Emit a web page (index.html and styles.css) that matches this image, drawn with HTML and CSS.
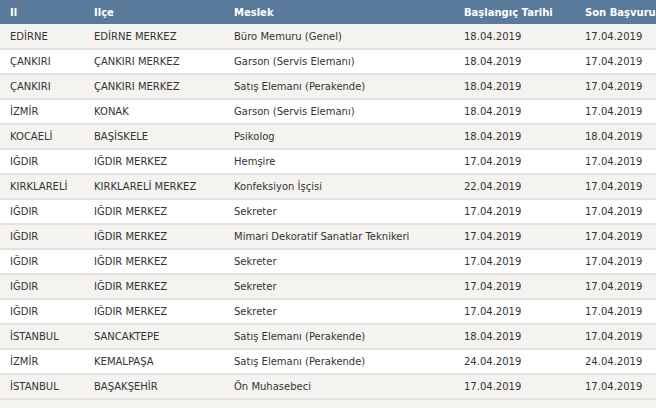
FILE: index.html
```html
<!DOCTYPE html>
<html lang="tr">
<head>
<meta charset="utf-8">
<link rel="stylesheet" href="styles.css">
</head>
<body>
<table class="jobs">
  <colgroup>
    <col class="c-il"><col class="c-ilce"><col class="c-meslek"><col class="c-bas"><col class="c-son">
  </colgroup>
  <thead>
    <tr><th>Il</th><th>Ilçe</th><th>Meslek</th><th>Başlangıç Tarihi</th><th>Son Başvuru</th></tr>
  </thead>
  <tbody>
    <tr><td>EDİRNE</td><td>EDİRNE MERKEZ</td><td>Büro Memuru (Genel)</td><td>18.04.2019</td><td>17.04.2019</td></tr>
    <tr><td>ÇANKIRI</td><td>ÇANKIRI MERKEZ</td><td>Garson (Servis Elemanı)</td><td>18.04.2019</td><td>17.04.2019</td></tr>
    <tr><td>ÇANKIRI</td><td>ÇANKIRI MERKEZ</td><td>Satış Elemanı (Perakende)</td><td>18.04.2019</td><td>17.04.2019</td></tr>
    <tr><td>İZMİR</td><td>KONAK</td><td>Garson (Servis Elemanı)</td><td>18.04.2019</td><td>17.04.2019</td></tr>
    <tr><td>KOCAELİ</td><td>BAŞİSKELE</td><td>Psikolog</td><td>18.04.2019</td><td>18.04.2019</td></tr>
    <tr><td>IĞDIR</td><td>IĞDIR MERKEZ</td><td>Hemşire</td><td>17.04.2019</td><td>17.04.2019</td></tr>
    <tr><td>KIRKLARELİ</td><td>KIRKLARELİ MERKEZ</td><td>Konfeksiyon İşçisi</td><td>22.04.2019</td><td>17.04.2019</td></tr>
    <tr><td>IĞDIR</td><td>IĞDIR MERKEZ</td><td>Sekreter</td><td>17.04.2019</td><td>17.04.2019</td></tr>
    <tr><td>IĞDIR</td><td>IĞDIR MERKEZ</td><td>Mimari Dekoratif Sanatlar Teknikeri</td><td>17.04.2019</td><td>17.04.2019</td></tr>
    <tr><td>IĞDIR</td><td>IĞDIR MERKEZ</td><td>Sekreter</td><td>17.04.2019</td><td>17.04.2019</td></tr>
    <tr><td>IĞDIR</td><td>IĞDIR MERKEZ</td><td>Sekreter</td><td>17.04.2019</td><td>17.04.2019</td></tr>
    <tr><td>IĞDIR</td><td>IĞDIR MERKEZ</td><td>Sekreter</td><td>17.04.2019</td><td>17.04.2019</td></tr>
    <tr><td>İSTANBUL</td><td>SANCAKTEPE</td><td>Satış Elemanı (Perakende)</td><td>18.04.2019</td><td>17.04.2019</td></tr>
    <tr><td>İZMİR</td><td>KEMALPAŞA</td><td>Satış Elemanı (Perakende)</td><td>24.04.2019</td><td>24.04.2019</td></tr>
    <tr><td>İSTANBUL</td><td>BAŞAKŞEHİR</td><td>Ön Muhasebeci</td><td>17.04.2019</td><td>17.04.2019</td></tr>
  </tbody>
</table>
</body>
</html>
```

FILE: styles.css
```css
html, body {
  margin: 0;
  padding: 0;
  background: #f6f5f2;
}
.jobs {
  width: 656px;
  table-layout: fixed;
  border-collapse: collapse;
  font-family: "DejaVu Sans", Verdana, sans-serif;
  font-size: 10px;
  color: #333;
}
.c-il { width: 84px; }
.c-ilce { width: 140px; }
.c-meslek { width: 230px; }
.c-bas { width: 121px; }
.c-son { width: 81px; }
.jobs th {
  background: #5a7a9c;
  color: #fff;
  font-weight: bold;
  text-align: left;
  height: 24px;
  padding: 0 0 0 10px;
  white-space: nowrap;
  box-sizing: border-box;
}
.jobs td {
  height: 25px;
  padding: 0 0 0 10px;
  white-space: nowrap;
  box-sizing: border-box;
  border-bottom: 2px solid #e2e1df;
  overflow: visible;
}
.jobs tbody tr:nth-child(odd) td { background: #f4f3f0; }
.jobs tbody tr:nth-child(even) td { background: #fff; }
```
